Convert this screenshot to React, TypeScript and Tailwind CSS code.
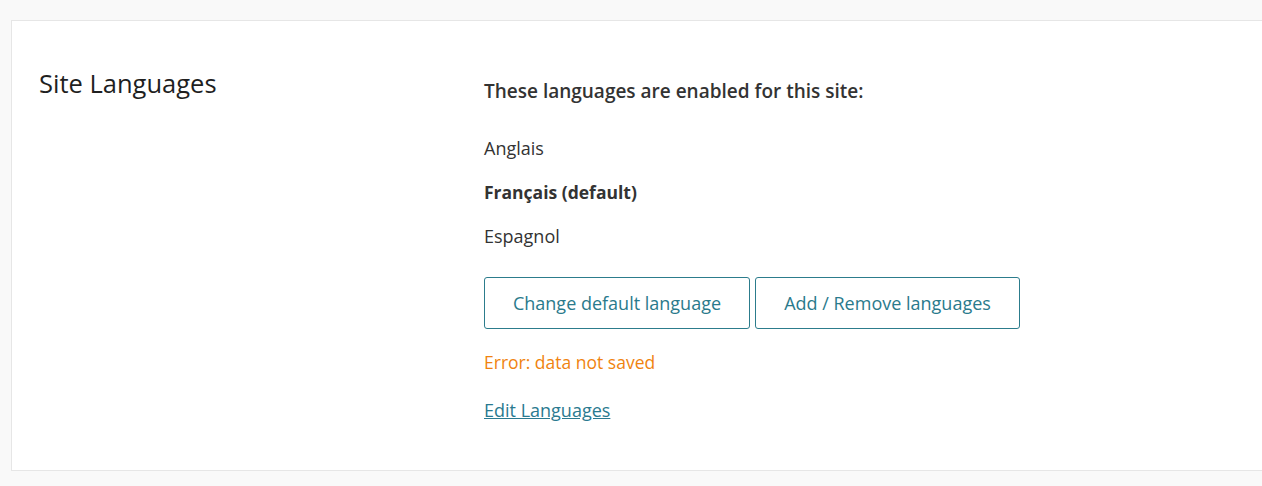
const languages = [
  { name: 'Anglais', isDefault: false },
  { name: 'Français', isDefault: true },
  { name: 'Espagnol', isDefault: false },
];

export default function App() {
  return (
    <div
      className="min-h-[486px] bg-[#f9f9f9] pt-5 pl-[11px] pb-4 text-[#2b2b2b]"
      style={{ fontFamily: '"Open Sans", "Noto Sans", sans-serif' }}
    >
      <div className="flex h-[451px] border border-r-0 border-[#e6e6e6] bg-white">
        <div className="w-[472px] shrink-0 pl-[27px] pt-[46px]">
          <h2 className="text-[25.5px] leading-8 text-[#1f1f1f]">Site Languages</h2>
        </div>
        <div className="pt-[58px]">
          <p className="text-[19px] font-semibold leading-6 text-[#333]">
            These languages are enabled for this site:
          </p>
          <ul className="mt-[33px] flex flex-col gap-5 text-[18px] leading-6 text-[#333]">
            {languages.map(lang => (
              <li key={lang.name} className={lang.isDefault ? 'font-bold text-[17.5px]' : ''}>
                {lang.name}
                {lang.isDefault && ' (default)'}
              </li>
            ))}
          </ul>
          <div className="mt-[29px] flex gap-[5px]">
            <button className="h-[52px] w-[266px] rounded-[3px] border border-[#2c7c8c] text-[18px] text-[#2a7a8c]">
              Change default language
            </button>
            <button className="h-[52px] w-[265px] rounded-[3px] border border-[#2c7c8c] text-[18px] text-[#2a7a8c]">
              Add / Remove languages
            </button>
          </div>
          <p className="mt-[21px] text-[17.5px] leading-6 text-[#f0830f]">Error: data not saved</p>
          <a href="#" className="mt-[24px] block text-[18px] leading-6 text-[#2a7a90] underline">
            Edit Languages
          </a>
        </div>
      </div>
    </div>
  );
}
